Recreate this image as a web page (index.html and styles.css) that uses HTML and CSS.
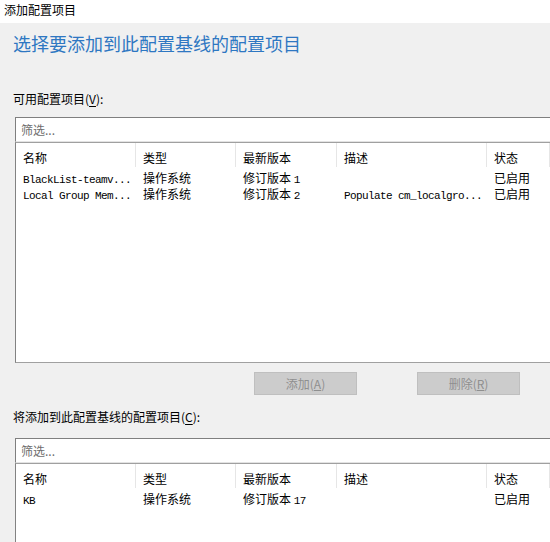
FILE: index.html
```html
<!DOCTYPE html>
<html lang="zh-CN">
<head>
<meta charset="utf-8">
<title>添加配置项目</title>
<link rel="stylesheet" href="styles.css">
</head>
<body>
<div class="window">
  <div class="titlebar">添加配置项目</div>
  <div class="content">
    <h1 class="heading">选择要添加到此配置基线的配置项目</h1>

    <div class="label label-first">可用配置项目(<u>V</u>):</div>
    <div class="filter">筛选...</div>
    <div class="list list-top">
      <div class="row header">
        <div class="cell">名称</div>
        <div class="cell">类型</div>
        <div class="cell">最新版本</div>
        <div class="cell">描述</div>
        <div class="cell">状态</div>
      </div>
      <div class="row">
        <div class="cell"><span class="mono">BlackList-teamv...</span></div>
        <div class="cell">操作系统</div>
        <div class="cell">修订版本 <span class="mono">1</span></div>
        <div class="cell"></div>
        <div class="cell">已启用</div>
      </div>
      <div class="row">
        <div class="cell"><span class="mono">Local Group Mem...</span></div>
        <div class="cell">操作系统</div>
        <div class="cell">修订版本 <span class="mono">2</span></div>
        <div class="cell"><span class="mono">Populate cm_localgro...</span></div>
        <div class="cell">已启用</div>
      </div>
    </div>

    <div class="buttons">
      <div class="btn">添加(<u>A</u>)</div>
      <div class="btn">删除(<u>R</u>)</div>
    </div>

    <div class="label label-second">将添加到此配置基线的配置项目(<u>C</u>):</div>
    <div class="filter filter-second">筛选...</div>
    <div class="list list-bottom">
      <div class="row header">
        <div class="cell">名称</div>
        <div class="cell">类型</div>
        <div class="cell">最新版本</div>
        <div class="cell">描述</div>
        <div class="cell">状态</div>
      </div>
      <div class="row">
        <div class="cell"><span class="mono">KB</span></div>
        <div class="cell">操作系统</div>
        <div class="cell">修订版本 <span class="mono">17</span></div>
        <div class="cell"></div>
        <div class="cell">已启用</div>
      </div>
    </div>
  </div>
</div>
</body>
</html>
```

FILE: styles.css
```css
html, body {
  margin: 0;
  padding: 0;
}
body {
  width: 550px;
  height: 542px;
  overflow: hidden;
  background: #f0f0f0;
  font-family: "Noto Sans CJK SC", "Liberation Sans", sans-serif;
  font-size: 12px;
  color: #000;
}
.window {
  display: flex;
  flex-direction: column;
  height: 542px;
}
.titlebar {
  height: 23px;
  line-height: 20px;
  background: #ffffff;
  padding-left: 4px;
  font-size: 12px;
}
.content {
  flex: 1;
  min-height: 0;
  display: flex;
  flex-direction: column;
  padding-left: 15px;
}
.heading {
  margin: 7px 0 0 -2px;
  font-size: 18px;
  font-weight: normal;
  line-height: 26px;
  color: #2e77c2;
}
.label {
  line-height: 16px;
  height: 16px;
  margin-left: -2px;
}
.label u {
  text-underline-offset: 2px;
}
.label-first {
  margin-top: 35px;
}
.label-second {
  margin-top: 14px;
}
.filter {
  box-sizing: border-box;
  height: 25px;
  margin-top: 10px;
  background: #ffffff;
  border-top: 1px solid #7f7f7f;
  border-left: 1px solid #7f7f7f;
  border-bottom: 1px solid #e3e3e3;
  padding-left: 5px;
  line-height: 23px;
  color: #6d6d6d;
}
.filter-second {
  margin-top: 13px;
}
.list {
  box-sizing: border-box;
  background: #ffffff;
  border-top: 1px solid #a0a0a0;
  border-left: 1px solid #828282;
}
.list-top {
  height: 221px;
  border-bottom: 1px solid #a0a0a0;
}
.list-bottom {
  flex: 1;
  min-height: 0;
}
.row {
  display: grid;
  grid-template-columns: 120px 100px 101px 150px minmax(0, 1fr);
  height: 16px;
  line-height: 16px;
}
.header {
  height: 27px;
  box-sizing: border-box;
  padding-bottom: 3px;
}
.header .cell {
  height: 24px;
  box-sizing: border-box;
  padding-top: 7px;
  border-right: 1px solid #e6e6e6;
}
.cell {
  height: 16px;
  padding-left: 7px;
  white-space: nowrap;
  overflow: hidden;
}
.mono {
  font-family: "Liberation Mono", monospace;
  font-size: 11px;
  letter-spacing: -0.6px;
  line-height: 12px;
}
.buttons {
  display: flex;
  gap: 60px;
  padding-left: 239px;
  margin-top: 9px;
}
.btn {
  width: 101px;
  height: 21px;
  line-height: 21px;
  text-align: center;
  background: #cccccc;
  border: 1px solid #bfbfbf;
  color: #8f8f8f;
}
```
